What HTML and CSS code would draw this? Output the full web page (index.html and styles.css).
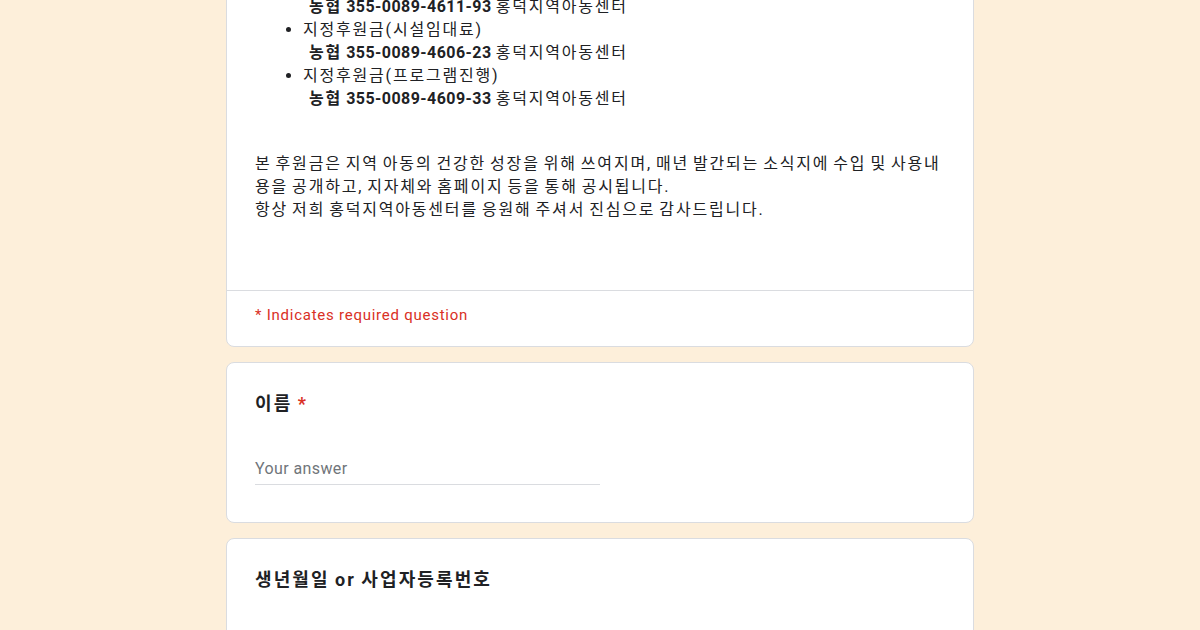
FILE: index.html
```html
<!DOCTYPE html>
<html lang="ko">
<head>
<meta charset="utf-8">
<link rel="stylesheet" href="styles.css">
</head>
<body>
<main class="page">
  <section class="card card-intro">
    <div class="desc">
      <ul class="accounts">
        <li>지정후원금(운영지원)<span class="acct"><b>농협 <span class="num">355-0089-4611-93</span></b> 홍덕지역아동센터</span></li>
        <li>지정후원금(시설임대료)<span class="acct"><b>농협 <span class="num">355-0089-4606-23</span></b> 홍덕지역아동센터</span></li>
        <li>지정후원금(프로그램진행)<span class="acct"><b>농협 <span class="num">355-0089-4609-33</span></b> 홍덕지역아동센터</span></li>
      </ul>
      <p class="note">본 후원금은 지역 아동의 건강한 성장을 위해 쓰여지며, 매년 발간되는 소식지에 수입 및 사용내용을 공개하고, 지자체와 홈페이지 등을 통해 공시됩니다.<br>항상 저희 홍덕지역아동센터를 응원해 주셔서 진심으로 감사드립니다.</p>
    </div>
    <div class="required-note">* Indicates required question</div>
  </section>

  <section class="card question">
    <div class="q-title">이름 <span class="star">*</span></div>
    <div class="answer">Your answer</div>
  </section>

  <section class="card question">
    <div class="q-title">생년월일 or 사업자등록번호</div>
    <div class="answer">Your answer</div>
  </section>
</main>
</body>
</html>
```

FILE: styles.css
```css
html, body {
  margin: 0;
  padding: 0;
}
body {
  background: #fdefda;
  font-family: Roboto, "Noto Sans CJK KR", sans-serif;
  color: #202124;
  overflow: hidden;
  height: 630px;
}
.page {
  width: 748px;
  margin: -53px auto 0;
  display: flex;
  flex-direction: column;
  gap: 15px;
}
.card {
  background: #fff;
  border: 1px solid #dadce0;
  border-radius: 8px;
}
.desc {
  padding: 24px 28px 69px;
  border-bottom: 1px solid #dadce0;
  font-size: 16px;
  line-height: 23px;
  letter-spacing: 1.8px;
  word-spacing: -1.7px;
}
.accounts {
  margin: 0;
  padding-left: 48px;
}
.accounts li {
  margin: 0;
}
.acct {
  display: block;
  padding-left: 6px;
}
.acct b {
  font-weight: 700;
}
.num {
  letter-spacing: 0.45px;
}
.note {
  margin: 42px 0 0;
}
.required-note {
  padding: 14px 28px 21px;
  font-size: 15px;
  line-height: 20px;
  color: #d93025;
  letter-spacing: 0.75px;
}
.question {
  padding: 29px 28px 37px;
}
.q-title {
  font-size: 18px;
  line-height: 24px;
  font-weight: 700;
  letter-spacing: 2.1px;
  word-spacing: -1.2px;
}
.star {
  color: #d93025;
  letter-spacing: 0;
}
.answer {
  margin-top: 42px;
  width: 345px;
  font-size: 16px;
  line-height: 22px;
  color: #70757a;
  letter-spacing: 0.4px;
  padding-bottom: 4px;
  border-bottom: 1px solid #dadce0;
}
```
